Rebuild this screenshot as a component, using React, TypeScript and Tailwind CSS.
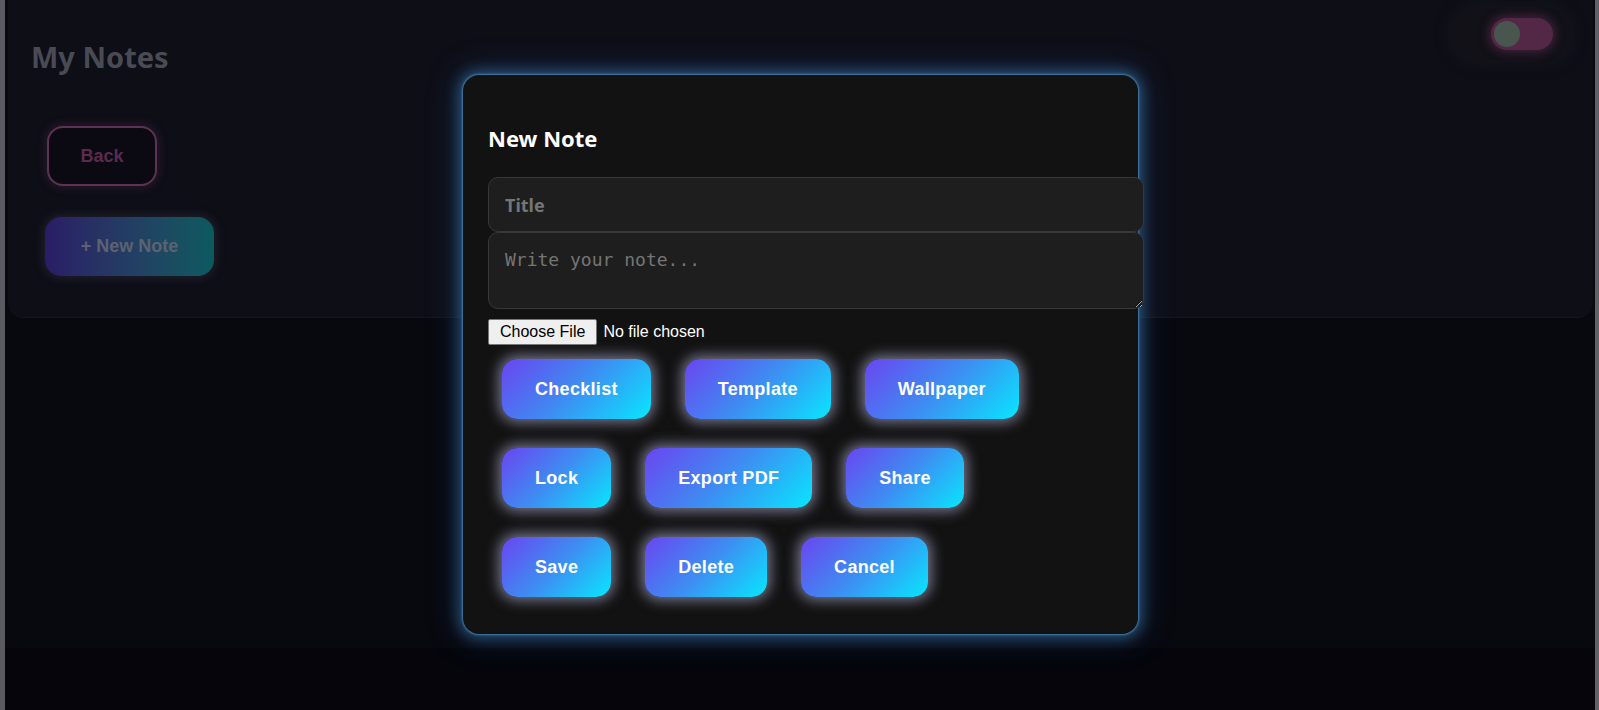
import { useState } from "react";

const actionRows: string[][] = [
  ["Checklist", "Template", "Wallpaper"],
  ["Lock", "Export PDF", "Share"],
  ["Save", "Delete", "Cancel"],
];

function GlowButton({ label }: { label: string }) {
  return (
    <button
      type="button"
      className="h-[60px] px-[33px] rounded-[15px] bg-linear-[135deg,#6a45f0_0%,#3d8ef2_50%,#08e6ff_100%] text-white text-[18px] leading-[21px] tracking-[0.3px] font-bold font-['Liberation_Sans',Arial,sans-serif] shadow-[0_0_14px_3px_rgba(210,210,255,0.55)]"
    >
      {label}
    </button>
  );
}

export default function App() {
  const [title, setTitle] = useState("");
  const [body, setBody] = useState("");

  return (
    <div className="relative h-[710px] w-full overflow-hidden flex bg-[#08080f] font-['Noto_Sans',sans-serif]">
      <div className="w-[5px] shrink-0 bg-[#5a5a60]" />

      <div className="flex-1 flex flex-col">
        {/* dimmed page behind the dialog */}
        <div className="h-[318px] ml-[3px] mr-[2px] rounded-b-[16px] bg-[#0e0e17] border-b border-[#15151f] pl-[23px] pr-[23px] pt-[8px]">
          <div className="flex items-start justify-between">
            <h1 className="mt-[30px] text-[29px] leading-[38px] font-bold text-[#4a4a55]">My Notes</h1>
            <div className="w-[117px] h-[52px] rounded-full bg-[#111117] shadow-[0_0_12px_6px_rgba(20,20,28,0.9)] flex items-center justify-end pr-[17px]">
              <div className="w-[62px] h-[32px] rounded-full bg-[#532846] shadow-[0_0_10px_3px_rgba(100,45,85,0.55)] flex items-center pl-[3px]">
                <div className="w-[26px] h-[26px] rounded-full bg-[#48564f]" />
              </div>
            </div>
          </div>

          <div className="flex flex-col items-start">
            <button
              type="button"
              className="mt-[50px] ml-[16px] w-[110px] h-[60px] rounded-[16px] border-2 border-[#5c3352] bg-[#0b0911] text-[#5a2b4f] text-[18px] font-bold font-['Liberation_Sans',Arial,sans-serif] shadow-[0_0_8px_2px_rgba(90,45,80,0.35)]"
            >
              Back
            </button>
            <button
              type="button"
              className="mt-[31px] ml-[14px] w-[169px] h-[59px] rounded-[16px] bg-linear-to-r from-[#2a1c66] to-[#0a5a5e] text-[#5d6270] text-[18px] font-bold font-['Liberation_Sans',Arial,sans-serif] shadow-[0_0_10px_2px_rgba(60,60,80,0.4)]"
            >
              + New Note
            </button>
          </div>
        </div>

        <div className="flex-1 bg-[#08080f]" />
        <div className="h-[62px] bg-[#05050b]" />
      </div>

      <div className="w-[4px] shrink-0 bg-[#626266]" />

      {/* dialog */}
      <div className="absolute left-[463px] top-[75px] w-[675px] rounded-[16px] bg-[#121212] pl-[25px] pr-[25px] pt-[48px] pb-[37px] shadow-[0_0_2px_1px_rgba(80,140,190,0.8),0_0_14px_4px_rgba(60,130,190,0.55),0_0_30px_8px_rgba(40,100,160,0.25)]">
        <h2 className="text-[22px] leading-[30px] font-bold text-white">New Note</h2>

        <input
          value={title}
          onChange={(e) => setTitle(e.target.value)}
          placeholder="Title"
          className="mt-[24px] block w-[656px] h-[55px] rounded-[10px] border border-[#383838] bg-[#1e1e1e] px-[16px] text-[18px] font-bold text-white placeholder:text-[#757575] outline-none"
        />

        <textarea
          value={body}
          onChange={(e) => setBody(e.target.value)}
          placeholder="Write your note..."
          className="block w-[656px] h-[77px] rounded-[10px] border border-[#383838] bg-[#1e1e1e] px-[16px] py-[16px] text-[18px] leading-[21px] text-white font-['DejaVu_Sans_Mono',monospace] placeholder:text-[#757575] outline-none"
        />

        <input
          type="file"
          className="mt-[10px] block text-[16px] leading-[18px] text-white font-['Liberation_Sans',Arial,sans-serif] file:mr-[6px] file:h-[26px] file:px-[11px] file:border file:border-[#767676] file:rounded-[2px] file:bg-[#efefef] file:text-black"
        />

        <div className="mt-[14px] ml-[14px] flex flex-col gap-y-[29px]">
          {actionRows.map((row, i) => (
            <div key={i} className="flex gap-x-[34px]">
              {row.map((label) => (
                <GlowButton key={label} label={label} />
              ))}
            </div>
          ))}
        </div>
      </div>
    </div>
  );
}
